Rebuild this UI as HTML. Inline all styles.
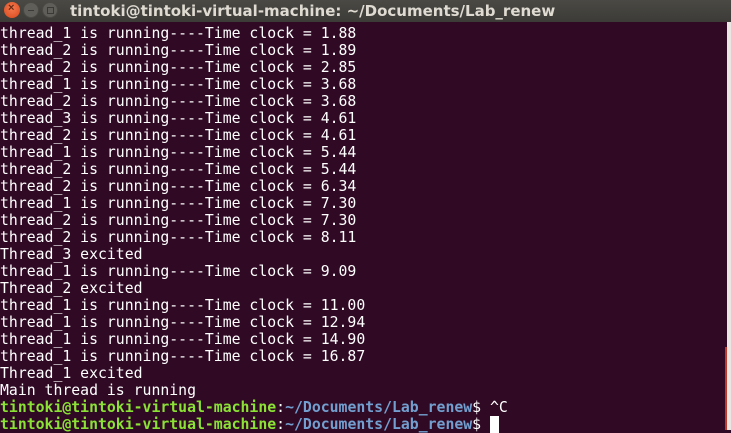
<!DOCTYPE html>
<html><head><meta charset="utf-8"><style>
html,body{margin:0;padding:0;width:731px;height:430px;overflow:hidden;background:#300a24;}
#tb{position:absolute;left:0;top:0;width:731px;height:22px;background:linear-gradient(#4a4944,#3c3b37);}
.b{position:absolute;top:2px;width:16px;height:16px;border-radius:50%;}
#t{position:absolute;left:70px;top:2px;font:bold 15px "DejaVu Sans","Liberation Sans",sans-serif;color:#dfdbd2;white-space:nowrap;}
pre{position:absolute;left:0;top:25px;margin:0;font:14.8px/17px "DejaVu Sans Mono","Liberation Mono",monospace;color:#ffffff;}
.g{color:#8ae234;font-weight:bold}.bl{color:#729fcf;font-weight:bold}
#sb{position:absolute;left:727px;top:22px;width:4px;height:408px;background:#e9e6e3;}
#sr{position:absolute;left:725px;top:347px;width:2px;height:83px;background:#c0392b;}
.cur{background:#fff;color:#fff}
</style></head><body>
<div id="tb">
<div class="b" style="left:4px;background:radial-gradient(circle at 50% 40%,#f47b4f,#d9461b);"><span style="position:absolute;left:4px;top:0px;font:bold 11px sans-serif;color:#6a2a14">×</span></div>
<div class="b" style="left:23px;background:#5f5e58;border:1px solid #4a4944;box-sizing:border-box"><div style="position:absolute;left:4px;top:7px;width:6px;height:1px;background:#3a3935"></div></div>
<div class="b" style="left:42px;background:#5f5e58;border:1px solid #4a4944;box-sizing:border-box"><div style="position:absolute;left:4px;top:4px;width:5px;height:5px;border:1px solid #3a3935"></div></div>
<div id="t">tintoki@tintoki-virtual-machine: ~/Documents/Lab_renew</div>
</div>
<pre>thread_1 is running----Time clock = 1.88
thread_2 is running----Time clock = 1.89
thread_2 is running----Time clock = 2.85
thread_1 is running----Time clock = 3.68
thread_2 is running----Time clock = 3.68
thread_3 is running----Time clock = 4.61
thread_2 is running----Time clock = 4.61
thread_1 is running----Time clock = 5.44
thread_2 is running----Time clock = 5.44
thread_2 is running----Time clock = 6.34
thread_1 is running----Time clock = 7.30
thread_2 is running----Time clock = 7.30
thread_2 is running----Time clock = 8.11
Thread_3 excited
thread_1 is running----Time clock = 9.09
Thread_2 excited
thread_1 is running----Time clock = 11.00
thread_1 is running----Time clock = 12.94
thread_1 is running----Time clock = 14.90
thread_1 is running----Time clock = 16.87
Thread_1 excited
Main thread is running
<span class="g">tintoki@tintoki-virtual-machine</span>:<span class="bl">~/Documents/Lab_renew</span>$ ^C
<span class="g">tintoki@tintoki-virtual-machine</span>:<span class="bl">~/Documents/Lab_renew</span>$ <span class="cur">_</span></pre>
<div id="sb"></div><div id="sr"></div>
</body></html>
